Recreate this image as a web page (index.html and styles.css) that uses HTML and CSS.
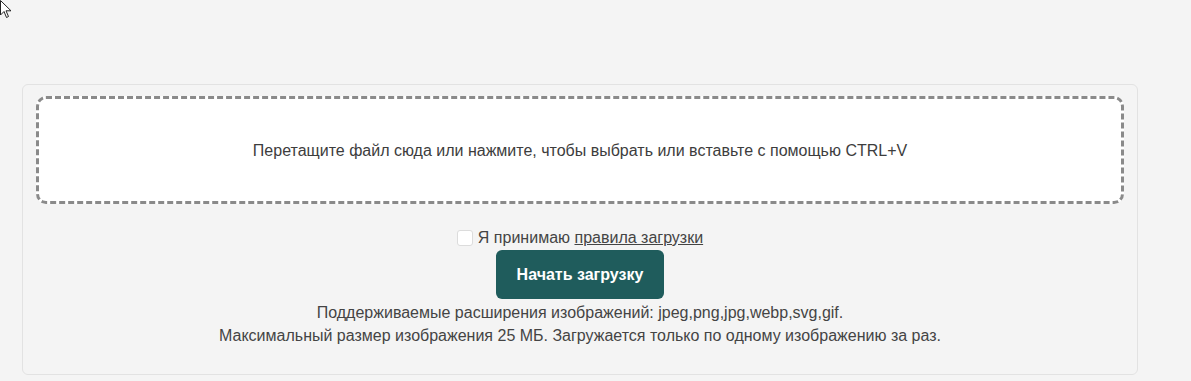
FILE: index.html
```html
<!DOCTYPE html>
<html lang="ru">
<head>
    <meta charset="UTF-8">
    <meta name="viewport" content="width=device-width, initial-scale=1.0">
    <title>Загрузка изображения</title>
    <link rel="stylesheet" href="styles.css">
</head>
<body>
    <svg class="cursor" viewBox="0 0 12 19" width="12" height="19">
        <path d="M0.5 0.5 L0.5 15 L4 11.5 L6.5 17.5 L8.5 16.5 L6 10.8 L11 10.8 Z" fill="#fff" stroke="#222" stroke-width="1"/>
    </svg>

    <div class="upload-card">
        <div class="dropzone" id="dropzone">
            Перетащите файл сюда или нажмите, чтобы выбрать или вставьте с помощью CTRL+V
        </div>

        <label class="agree">
            <input type="checkbox" id="agree">
            <span>Я принимаю <a href="#">правила загрузки</a></span>
        </label>

        <button class="start-btn" id="start-btn">Начать загрузку</button>

        <div class="info">
            <p>Поддерживаемые расширения изображений: jpeg,png,jpg,webp,svg,gif.</p>
            <p>Максимальный размер изображения 25 МБ. Загружается только по одному изображению за раз.</p>
        </div>
    </div>
</body>
</html>
```

FILE: styles.css
```css
:root {
    --bg: #f4f4f4;
    --border: #e2e2e2;
    --dash: #8a8a8a;
    --text: #444;
    --teal: #1f5c5c;
}

body {
    margin: 0;
    background: var(--bg);
    font-family: "Liberation Sans", Arial, sans-serif;
    color: var(--text);
    padding: 84px 0 0 22px;
}

.cursor {
    position: absolute;
    top: 0;
    left: 0;
}

.upload-card {
    box-sizing: border-box;
    width: 1116px;
    border: 1px solid var(--border);
    border-radius: 6px;
    padding: 11px 13px 27px 13px;
    display: flex;
    flex-direction: column;
    align-items: center;
}

.dropzone {
    box-sizing: border-box;
    width: 100%;
    height: 108px;
    background: #fff;
    border: 3px dashed var(--dash);
    border-radius: 10px;
    display: flex;
    align-items: center;
    justify-content: center;
    font-size: 16px;
    color: #3d3d3d;
    cursor: pointer;
    padding-top: 2px;
}

.agree {
    display: flex;
    align-items: center;
    gap: 5px;
    margin-top: 24px;
    font-size: 16px;
    color: #444;
    line-height: 20px;
}

.agree input {
    appearance: none;
    width: 16px;
    height: 16px;
    margin: 0;
    border: 1px solid #dcdcdc;
    border-radius: 3px;
    background: #fff;
}

.agree a {
    color: #444;
    text-decoration: underline;
}

.start-btn {
    margin-top: 2px;
    width: 168px;
    height: 49px;
    border: none;
    border-radius: 6px;
    background: var(--teal);
    color: #fff;
    font-family: "Liberation Sans", Arial, sans-serif;
    font-size: 16px;
    font-weight: 700;
    cursor: pointer;
}

.info {
    margin-top: 2px;
    text-align: center;
    font-size: 16px;
    line-height: 23px;
}

.info p {
    margin: 0;
}
```
